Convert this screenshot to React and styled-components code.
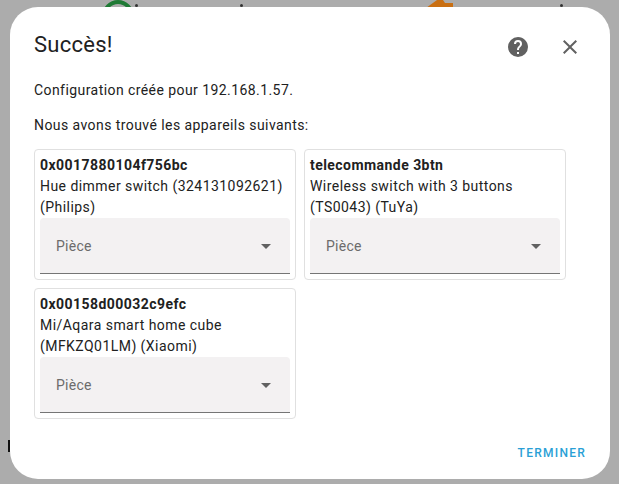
import React from 'react'
import styled, { createGlobalStyle } from 'styled-components'

const GlobalStyle = createGlobalStyle`
  html, body { margin: 0; padding: 0; }
  body { font-family: Roboto, "Liberation Sans", sans-serif; }
`

const devices = [
  { id: '0x0017880104f756bc', lines: 'Hue dimmer switch (324131092621) (Philips)' },
  { id: 'telecommande 3btn', lines: 'Wireless switch with 3 buttons (TS0043) (TuYa)' },
  { id: '0x00158d00032c9efc', lines: 'Mi/Aqara smart home cube (MFKZQ01LM) (Xiaomi)' },
]

function App() {
  return (
    <Backdrop>
      <GlobalStyle />
      <GreenPeek />
      <OrangePeek viewBox="0 0 28 8"><path d="M0 8 L11 0 H17 L19 3 H27 V7 H24 V8 Z" /></OrangePeek>
      <Dot $left={135} />
      <Dot $left={240} />
      <Dot $left={560} />
      <EdgeMark />
      <Dialog>
        <Header>
          <Title>Succès!</Title>
          <HeaderIcons>
            <IconButton aria-label="Aide">
              <svg width="24" height="24" viewBox="0 0 24 24" fill="#616161">
                <path d="M15.07 11.25L14.17 12.17C13.45 12.89 13 13.5 13 15H11V14.5C11 13.39 11.45 12.39 12.17 11.67L13.41 10.41C13.78 10.05 14 9.55 14 9C14 7.89 13.1 7 12 7A2 2 0 0 0 10 9H8A4 4 0 0 1 12 5A4 4 0 0 1 16 9C16 9.88 15.64 10.67 15.07 11.25M13 19H11V17H13M12 2A10 10 0 0 0 2 12A10 10 0 0 0 12 22A10 10 0 0 0 22 12C22 6.47 17.5 2 12 2Z" />
              </svg>
            </IconButton>
            <IconButton aria-label="Fermer">
              <svg width="24" height="24" viewBox="0 0 24 24" fill="#616161">
                <path d="M19 6.41L17.59 5L12 10.59L6.41 5L5 6.41L10.59 12L5 17.59L6.41 19L12 13.41L17.59 19L19 17.59L13.41 12L19 6.41Z" />
              </svg>
            </IconButton>
          </HeaderIcons>
        </Header>
        <Paragraph>Configuration créée pour 192.168.1.57.</Paragraph>
        <Paragraph>Nous avons trouvé les appareils suivants:</Paragraph>
        <DeviceGrid>
          {devices.map((device) => (
            <DeviceCard key={device.id}>
              <DeviceId>{device.id}</DeviceId>
              <DeviceInfo>{device.lines}</DeviceInfo>
              <AreaSelect>
                <AreaLabel>Pièce</AreaLabel>
                <Caret />
              </AreaSelect>
            </DeviceCard>
          ))}
        </DeviceGrid>
        <Footer>
          <FinishButton>TERMINER</FinishButton>
        </Footer>
      </Dialog>
    </Backdrop>
  )
}

const Backdrop = styled.div`
  position: relative;
  box-sizing: border-box;
  width: 619px;
  height: 484px;
  padding: 7px 9px 5px 10px;
  background: #acacac;
  overflow: hidden;
`

const GreenPeek = styled.div`
  position: absolute;
  left: 102px;
  top: 0;
  width: 32px;
  height: 32px;
  box-sizing: border-box;
  border-radius: 50%;
  border: 4px solid #1f7a35;
`

const OrangePeek = styled.svg`
  position: absolute;
  left: 426px;
  top: 0;
  width: 28px;
  height: 8px;
  fill: #c96f12;
`

const Dot = styled.span`
  position: absolute;
  left: ${(p) => p.$left}px;
  top: 4px;
  width: 3px;
  height: 3px;
  border-radius: 50%;
  background: #333;
`

const EdgeMark = styled.span`
  position: absolute;
  left: 8px;
  top: 440px;
  width: 2px;
  height: 12px;
  background: #111;
`

const Dialog = styled.div`
  position: relative;
  box-sizing: border-box;
  display: flex;
  flex-direction: column;
  height: 472px;
  padding: 24px 24px 16px;
  background: #fff;
  border-radius: 28px;
  color: #212121;
`

const Header = styled.div`
  display: flex;
  justify-content: space-between;
  align-items: flex-start;
  height: 49px;
`

const Title = styled.h2`
  margin: 0;
  font-size: 22px;
  font-weight: 400;
  line-height: 28px;
  letter-spacing: 0.25px;
`

const HeaderIcons = styled.div`
  display: flex;
  gap: 28px;
  margin: 4px 4px 0 0;
`

const IconButton = styled.div`
  width: 24px;
  height: 24px;
`

const Paragraph = styled.p`
  margin: 0 0 15px;
  font-size: 14px;
  line-height: 20px;
  letter-spacing: 0.43px;
`

const DeviceGrid = styled.div`
  display: flex;
  flex-wrap: wrap;
  align-items: flex-start;
  gap: 8px;
  margin-top: -1px;
`

const DeviceCard = styled.div`
  box-sizing: border-box;
  width: 262px;
  height: 131px;
  padding: 5px;
  border: 1px solid #e0e0e0;
  border-radius: 4px;
  font-size: 14px;
  line-height: 21px;
  letter-spacing: 0.45px;
`

const DeviceId = styled.div`
  font-weight: 700;
`

const DeviceInfo = styled.div``

const AreaSelect = styled.div`
  box-sizing: border-box;
  display: flex;
  justify-content: space-between;
  align-items: center;
  height: 56px;
  padding: 2px 19px 0 16px;
  background: #f3f1f2;
  border-bottom: 1px solid #757575;
  border-radius: 4px 4px 0 0;
`

const AreaLabel = styled.span`
  color: #6b6b6b;
  font-size: 14px;
  letter-spacing: 0.25px;
`

const Caret = styled.span`
  width: 0;
  height: 0;
  border-left: 5px solid transparent;
  border-right: 5px solid transparent;
  border-top: 5px solid #616161;
`

const Footer = styled.div`
  display: flex;
  justify-content: flex-end;
  margin-top: auto;
`

const FinishButton = styled.button`
  padding: 0;
  border: 0;
  background: none;
  color: #2a9fd6;
  font-family: Roboto, "Liberation Sans", sans-serif;
  font-size: 12px;
  font-weight: 500;
  line-height: 20px;
  letter-spacing: 1.25px;
`

export default App
